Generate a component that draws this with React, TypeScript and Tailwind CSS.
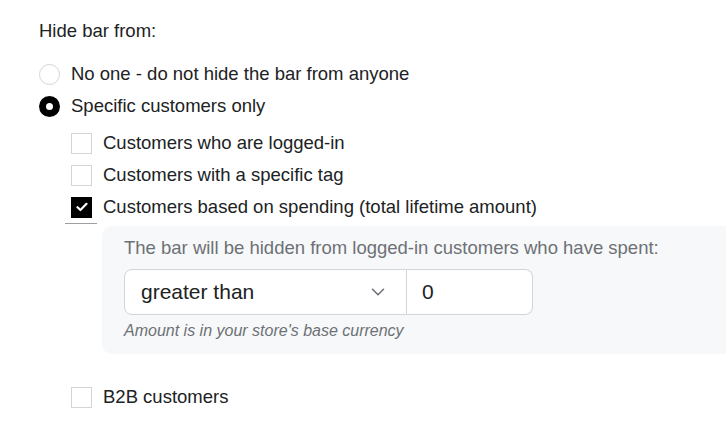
import { ChevronDown } from 'lucide-react';

const font = { fontFamily: '"Liberation Sans", Arial, Helvetica, sans-serif' };

function Radio({ checked, label }: { checked?: boolean; label: string }) {
  return (
    <label className="flex h-7 items-center gap-[11px]">
      {checked ? (
        <span className="flex size-[21px] items-center justify-center rounded-full bg-black">
          <span className="size-[7px] rounded-full bg-white" />
        </span>
      ) : (
        <span className="size-[21px] rounded-full border border-[#d2d5d8] bg-white" />
      )}
      <span>{label}</span>
    </label>
  );
}

function Checkbox({ checked, label }: { checked?: boolean; label: string }) {
  return (
    <label className="flex h-7 items-center gap-[11px]">
      {checked ? (
        <span className="flex size-[21px] items-center justify-center bg-black">
          <svg width="12" height="10" viewBox="0 0 12 10" fill="none">
            <path d="M1.5 5.2 4.4 8 10.5 1.8" stroke="white" strokeWidth="2.2" strokeLinecap="round" strokeLinejoin="round" />
          </svg>
        </span>
      ) : (
        <span className="size-[21px] border border-[#d2d5d8] bg-white" />
      )}
      <span>{label}</span>
    </label>
  );
}

export default function App() {
  return (
    <div className="h-[436px] w-[726px] overflow-hidden bg-white text-[18.5px] text-[#202223]" style={font}>
      <div className="pl-[39px] pt-[19px]">
        <div className="leading-6">Hide bar from:</div>

        <div className="mt-[17px] flex flex-col gap-1">
          <Radio label="No one - do not hide the bar from anyone" />
          <Radio checked label="Specific customers only" />
        </div>

        <div className="mt-[9px] pl-[32px]">
          <div className="flex flex-col gap-1">
            <Checkbox label="Customers who are logged-in" />
            <Checkbox label="Customers with a specific tag" />
            <Checkbox checked label="Customers based on spending (total lifetime amount)" />
          </div>
          <div className="ml-[-6px] mt-[2px] h-px w-[32px] bg-[#9ca0a4]" />

          <div className="ml-[31px] mt-[2px] w-[640px] rounded-[10px] bg-[#f7f8fa] pb-[13px] pl-[22px] pt-[10px]">
            <div className="leading-6 text-[#6d7175]">
              The bar will be hidden from logged-in customers who have spent:
            </div>
            <div className="mt-[9px] flex h-[46px] w-[409px]">
              <div className="flex w-[283px] items-center justify-between rounded-l-[8px] border border-[#d2d5d8] bg-white pl-4 pr-[17px] text-[21px]">
                <span>greater than</span>
                <ChevronDown size={22} strokeWidth={1.7} className="text-[#6d7175]" />
              </div>
              <div className="flex flex-1 items-center rounded-r-[8px] border border-l-0 border-[#d2d5d8] bg-white pl-[15px] text-[21px]">
                0
              </div>
            </div>
            <div className="mt-[6px] text-[16px] italic leading-5 text-[#6d7175]">
              Amount is in your store's base currency
            </div>
          </div>

          <div className="mt-[29px]">
            <Checkbox label="B2B customers" />
          </div>
        </div>
      </div>
    </div>
  );
}
